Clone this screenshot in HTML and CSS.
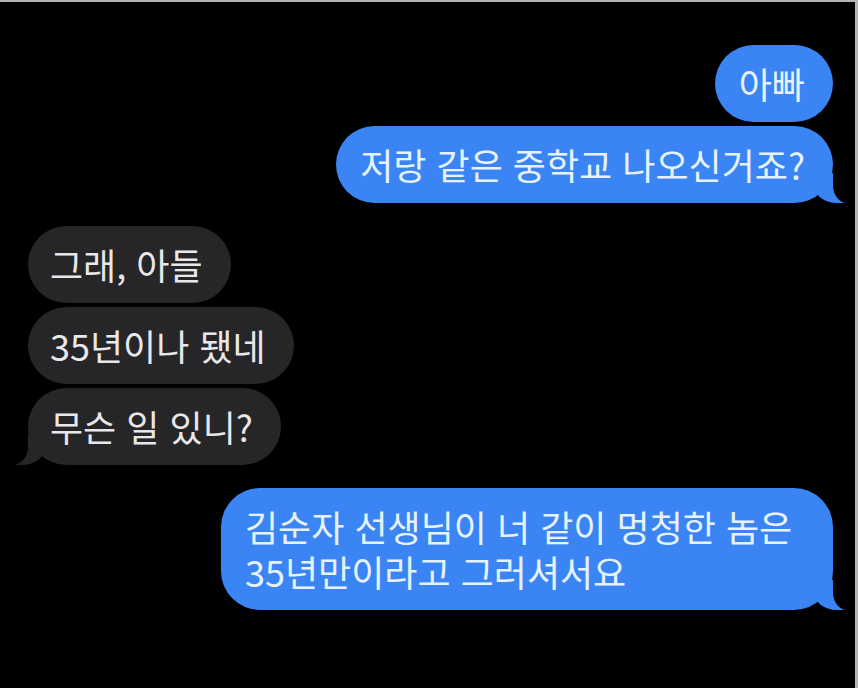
FILE: index.html
```html
<!DOCTYPE html>
<html lang="ko">
<head>
<meta charset="utf-8">
<title>Messages</title>
<link rel="stylesheet" href="styles.css">
</head>
<body>
<div class="screen">
  <div class="bubble sent">아빠</div>
  <div class="bubble sent tail">저랑 같은 중학교 나오신거죠?</div>
  <div class="group-gap"></div>
  <div class="bubble recv">그래, 아들</div>
  <div class="bubble recv">35년이나 됐네</div>
  <div class="bubble recv tail">무슨 일 있니?</div>
  <div class="group-gap"></div>
  <div class="bubble sent tail">김순자 선생님이 너 같이 멍청한 놈은 35년만이라고 그러셔서요</div>
</div>
</body>
</html>
```
FILE: styles.css
```css
html, body {
  margin: 0;
  padding: 0;
  background: #000;
}

.screen {
  width: 858px;
  height: 688px;
  box-sizing: border-box;
  background: #000;
  border-top: 2px solid #b4b4b4;
  border-right: 3px solid #b4b4b4;
  padding: 43px 22px 0 28px;
  display: flex;
  flex-direction: column;
  gap: 4px;
  font-family: "Noto Sans CJK KR", "Noto Sans", sans-serif;
  font-size: 36px;
  letter-spacing: 0;
  line-height: 45px;
  word-break: keep-all;
}

.group-gap {
  height: 15px;
  flex: none;
}

.bubble {
  position: relative;
  box-sizing: border-box;
  max-width: 612px;
  padding: 16px 28px 16px 24px;
  border-radius: 39px;
  flex: none;
}

.sent {
  align-self: flex-end;
  background: #3a84f4;
  color: #e6f3ff;
}

.recv {
  align-self: flex-start;
  background: #262628;
  color: #e8e8ea;
  padding-left: 22px;
}

.sent.tail::before,
.sent.tail::after,
.recv.tail::before,
.recv.tail::after {
  content: "";
  position: absolute;
  bottom: 0;
  height: 30px;
}

.sent.tail::before {
  right: -12px;
  width: 32px;
  background: #3a84f4;
  border-bottom-left-radius: 24px 20px;
}

.sent.tail::after {
  right: -20px;
  width: 20px;
  background: #000;
  border-bottom-left-radius: 14px 18px;
}

.recv.tail::before {
  left: -14px;
  width: 32px;
  background: #262628;
  border-bottom-right-radius: 24px 20px;
}

.recv.tail::after {
  left: -20px;
  width: 20px;
  background: #000;
  border-bottom-right-radius: 16px 18px;
}
```
